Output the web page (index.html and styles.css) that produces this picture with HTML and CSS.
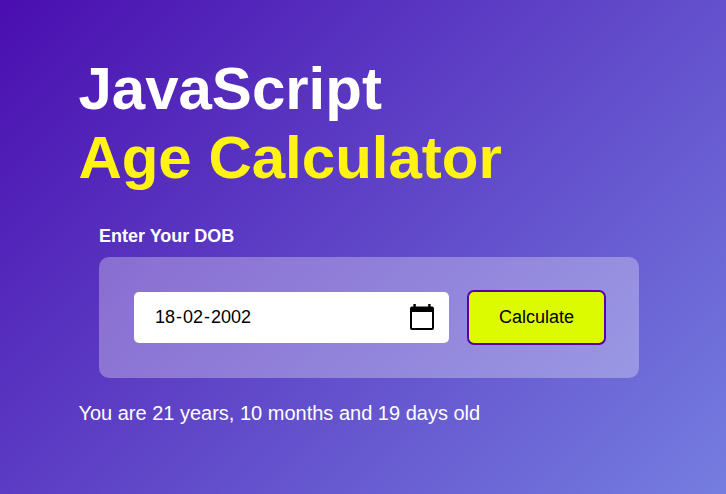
FILE: index.html
```html
<!DOCTYPE html>
<html lang="en">
<head>
<meta charset="utf-8">
<title>Age Calculator</title>
<link rel="stylesheet" href="styles.css">
</head>
<body>
<main class="calculator">
  <h1>JavaScript<br><span>Age Calculator</span></h1>
  <section class="entry">
    <h2>Enter Your DOB</h2>
    <div class="input-box">
      <div class="date-field">
        <div class="date"><span>18</span>-<span>02</span>-<span>2002</span></div>
        <svg class="calendar" viewBox="0 0 24 26" aria-hidden="true">
          <path fill-rule="evenodd" d="M3.400 0h2.400v2.600h12.400V0h2.400v2.600H22a2 2 0 0 1 2 2V24a2 2 0 0 1-2 2H2a2 2 0 0 1-2-2V4.600a2 2 0 0 1 2-2h1.400zM2 8v16h20V8z"/>
        </svg>
      </div>
      <button class="calculate" type="button">Calculate</button>
    </div>
  </section>
  <p class="result">You are 21 years, 10 months and 19 days old</p>
</main>
</body>
</html>
```
FILE: styles.css
```css
* {
  box-sizing: border-box;
  margin: 0;
  padding: 0;
}

body {
  min-height: 100vh;
  font-family: "Liberation Sans", Arial, sans-serif;
  color: #fff;
  background: linear-gradient(135deg, #4a0eb0, #757ee0);
}

.calculator {
  width: 640px;
  padding: 54px 0 0 78.4px;
}

h1 {
  font-size: 60px;
  line-height: 69px;
}

h1 span {
  color: #fff314;
}

.entry {
  width: 540px;
  margin: 34px 0 0 20.6px;
}

h2 {
  font-size: 18px;
  line-height: 20px;
}

.input-box {
  display: flex;
  align-items: center;
  gap: 18px;
  height: 121px;
  margin-top: 11px;
  padding: 0 33px 0 35px;
  border-radius: 10px;
  background: rgba(255, 255, 255, 0.3);
}

.date-field {
  display: flex;
  flex: 1;
  align-items: center;
  justify-content: space-between;
  height: 51px;
  padding: 0 15px 0 20px;
  border-radius: 5px;
  background: #fff;
  color: #000;
  font-size: 18px;
}

.date span {
  padding: 0 1px;
}

.calendar {
  width: 24px;
  height: 26px;
  margin-bottom: 1px;
}

.calculate {
  width: 139px;
  height: 55px;
  border: 2px solid #5a00a6;
  border-radius: 7px;
  background: #dcfb00;
  color: #000;
  font-family: inherit;
  font-size: 18px;
}

.result {
  margin-top: 24px;
  font-size: 20px;
  line-height: 23px;
}
```
